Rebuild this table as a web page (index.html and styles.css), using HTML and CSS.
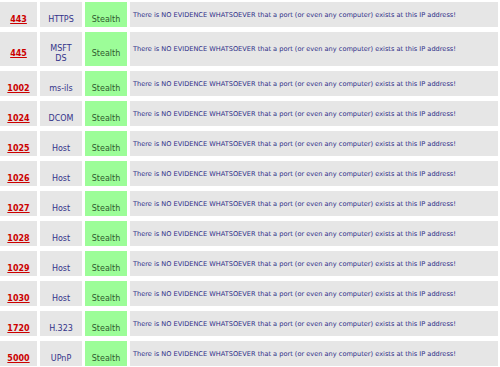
FILE: index.html
```html
<!DOCTYPE html>
<html>
<head>
<meta charset="utf-8">
<link rel="stylesheet" href="styles.css">
</head>
<body>
<div class="ports">
  <div class="row"><div class="cell port"><a href="#">443</a></div><div class="cell name">HTTPS</div><div class="cell status">Stealth</div><div class="cell desc">There is NO EVIDENCE WHATSOEVER that a port (or even any computer) exists at this IP address!</div></div>
  <div class="row"><div class="cell port"><a href="#">445</a></div><div class="cell name">MSFT<br>DS</div><div class="cell status">Stealth</div><div class="cell desc">There is NO EVIDENCE WHATSOEVER that a port (or even any computer) exists at this IP address!</div></div>
  <div class="row"><div class="cell port"><a href="#">1002</a></div><div class="cell name">ms-ils</div><div class="cell status">Stealth</div><div class="cell desc">There is NO EVIDENCE WHATSOEVER that a port (or even any computer) exists at this IP address!</div></div>
  <div class="row"><div class="cell port"><a href="#">1024</a></div><div class="cell name">DCOM</div><div class="cell status">Stealth</div><div class="cell desc">There is NO EVIDENCE WHATSOEVER that a port (or even any computer) exists at this IP address!</div></div>
  <div class="row"><div class="cell port"><a href="#">1025</a></div><div class="cell name">Host</div><div class="cell status">Stealth</div><div class="cell desc">There is NO EVIDENCE WHATSOEVER that a port (or even any computer) exists at this IP address!</div></div>
  <div class="row"><div class="cell port"><a href="#">1026</a></div><div class="cell name">Host</div><div class="cell status">Stealth</div><div class="cell desc">There is NO EVIDENCE WHATSOEVER that a port (or even any computer) exists at this IP address!</div></div>
  <div class="row"><div class="cell port"><a href="#">1027</a></div><div class="cell name">Host</div><div class="cell status">Stealth</div><div class="cell desc">There is NO EVIDENCE WHATSOEVER that a port (or even any computer) exists at this IP address!</div></div>
  <div class="row"><div class="cell port"><a href="#">1028</a></div><div class="cell name">Host</div><div class="cell status">Stealth</div><div class="cell desc">There is NO EVIDENCE WHATSOEVER that a port (or even any computer) exists at this IP address!</div></div>
  <div class="row"><div class="cell port"><a href="#">1029</a></div><div class="cell name">Host</div><div class="cell status">Stealth</div><div class="cell desc">There is NO EVIDENCE WHATSOEVER that a port (or even any computer) exists at this IP address!</div></div>
  <div class="row"><div class="cell port"><a href="#">1030</a></div><div class="cell name">Host</div><div class="cell status">Stealth</div><div class="cell desc">There is NO EVIDENCE WHATSOEVER that a port (or even any computer) exists at this IP address!</div></div>
  <div class="row"><div class="cell port"><a href="#">1720</a></div><div class="cell name">H.323</div><div class="cell status">Stealth</div><div class="cell desc">There is NO EVIDENCE WHATSOEVER that a port (or even any computer) exists at this IP address!</div></div>
  <div class="row"><div class="cell port"><a href="#">5000</a></div><div class="cell name">UPnP</div><div class="cell status">Stealth</div><div class="cell desc">There is NO EVIDENCE WHATSOEVER that a port (or even any computer) exists at this IP address!</div></div>
</div>
</body>
</html>
```
FILE: styles.css
```css
html, body {
  margin: 0;
  padding: 0;
  background: #ffffff;
}
body {
  font-family: "DejaVu Sans", Verdana, sans-serif;
  width: 500px;
  height: 367px;
  overflow: hidden;
}
.ports {
  display: flex;
  flex-direction: column;
  gap: 5px;
  padding: 2px 2px 0 0;
  width: 498px;
}
.row {
  display: grid;
  grid-template-columns: 37px 42px 42px 1fr;
  column-gap: 3px;
  min-height: 25px;
}
.cell {
  background: #e6e6e6;
  display: flex;
  flex-direction: column;
  justify-content: center;
  align-items: center;
  text-align: center;
  padding: 12px 0 2px;
  font-size: 8px;
  line-height: 10px;
  box-sizing: border-box;
}
.port a {
  color: #cc0000;
  font-weight: bold;
  text-decoration: underline;
}
.name {
  color: #33338a;
}
.status {
  background: #9cfd98;
  color: #2f5a2f;
}
.desc {
  padding: 0 0 0 3px;
  align-items: flex-start;
  text-align: left;
  font-size: 6.6px;
  color: #2e2e88;
  white-space: nowrap;
}
```
